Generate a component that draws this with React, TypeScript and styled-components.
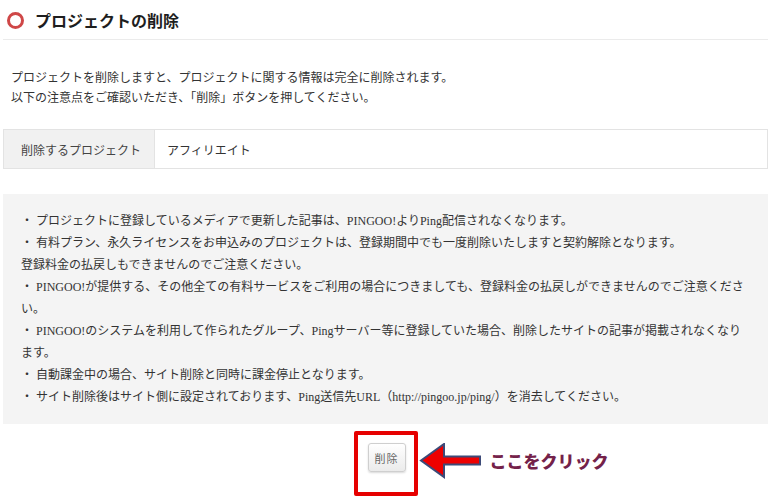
import styled, { createGlobalStyle } from 'styled-components';

const GlobalStyle = createGlobalStyle`
  html, body {
    margin: 0;
    padding: 0;
    background: #ffffff;
  }
  body {
    font-family: "Liberation Serif", "Noto Sans CJK JP", serif;
    color: #333333;
  }
`;

const notes: { text: string; extra?: string }[] = [
  { text: 'プロジェクトに登録しているメディアで更新した記事は、PINGOO!よりPing配信されなくなります。' },
  {
    text: '有料プラン、永久ライセンスをお申込みのプロジェクトは、登録期間中でも一度削除いたしますと契約解除となります。',
    extra: '登録料金の払戻しもできませんのでご注意ください。',
  },
  { text: 'PINGOO!が提供する、その他全ての有料サービスをご利用の場合につきましても、登録料金の払戻しができませんのでご注意ください。' },
  { text: 'PINGOO!のシステムを利用して作られたグループ、Pingサーバー等に登録していた場合、削除したサイトの記事が掲載されなくなります。' },
  { text: '自動課金中の場合、サイト削除と同時に課金停止となります。' },
  { text: 'サイト削除後はサイト側に設定されております、Ping送信先URL（http://pingoo.jp/ping/）を消去してください。' },
];

const App = () => {
  return (
    <>
      <GlobalStyle />
      <Page>
        <Header>
          <RingMark />
          <Title>プロジェクトの削除</Title>
        </Header>

        <Lead>
          プロジェクトを削除しますと、プロジェクトに関する情報は完全に削除されます。
          <br />
          以下の注意点をご確認いただき、「削除」ボタンを押してください。
        </Lead>

        <InfoTable>
          <LabelCell>削除するプロジェクト</LabelCell>
          <ValueCell>アフィリエイト</ValueCell>
        </InfoTable>

        <NoteBox>
          {notes.map((note, idx) => (
            <NoteLine key={idx}>
              {`・ ${note.text}`}
              {note.extra && (
                <>
                  <br />
                  {note.extra}
                </>
              )}
            </NoteLine>
          ))}
        </NoteBox>

        <ActionRow>
          <HighlightFrame>
            <DeleteButton type="button">削除</DeleteButton>
          </HighlightFrame>
          <Annotation>
            <svg width="64" height="36" viewBox="0 0 64 36">
              <path
                d="M2 17.5 L25 1 L25 13.5 L61 13.5 L61 21.5 L25 21.5 L25 34 Z"
                fill="#ee0000"
                stroke="#3d4a78"
                strokeWidth="2"
                strokeLinejoin="miter"
              />
            </svg>
            <ClickLabel>ここをクリック</ClickLabel>
          </Annotation>
        </ActionRow>
      </Page>
    </>
  );
};

const Page = styled.div`
  width: 765px;
  margin-left: 3px;
  display: flex;
  flex-direction: column;
`;

const Header = styled.div`
  height: 40px;
  display: flex;
  align-items: center;
  gap: 11px;
  padding-left: 4px;
  border-bottom: 1px solid #ebebeb;
  box-sizing: border-box;
  padding-top: 1px;
`;

const RingMark = styled.span`
  width: 17px;
  height: 17px;
  border: 3.5px solid #cf4747;
  border-radius: 50%;
  box-sizing: border-box;
`;

const Title = styled.h1`
  margin: 0;
  font-family: "Noto Sans CJK JP", sans-serif;
  font-size: 16px;
  font-weight: 700;
  color: #1e1e1e;
  line-height: 20px;
`;

const Lead = styled.p`
  margin: 27px 0 0;
  padding-left: 8px;
  font-family: "Noto Sans CJK JP", sans-serif;
  font-size: 12px;
  line-height: 20px;
  color: #333333;
`;

const InfoTable = styled.div`
  margin-top: 22px;
  display: flex;
  height: 40px;
  border: 1px solid #e3e3e3;
  box-sizing: border-box;
  font-family: "Noto Sans CJK JP", sans-serif;
  font-size: 12px;
`;

const LabelCell = styled.div`
  width: 151px;
  padding-left: 17px;
  box-sizing: border-box;
  display: flex;
  align-items: center;
  background: #f1f1f1;
  border-right: 1px solid #e3e3e3;
  color: #444444;
`;

const ValueCell = styled.div`
  flex: 1;
  padding-left: 12px;
  display: flex;
  align-items: center;
  color: #333333;
`;

const NoteBox = styled.div`
  margin-top: 25px;
  padding: 16px 18px;
  background: #f4f4f4;
  display: flex;
  flex-direction: column;
`;

const NoteLine = styled.p`
  margin: 0;
  font-size: 12px;
  line-height: 22px;
  color: #333333;
`;

const ActionRow = styled.div`
  margin-top: 7px;
  display: grid;
  grid-template-columns: 1fr auto 1fr;
  align-items: center;
`;

const HighlightFrame = styled.div`
  grid-column: 2;
  width: 64px;
  height: 65px;
  box-sizing: border-box;
  border: 4px solid #e60000;
  border-radius: 2px;
  padding: 8px 8px 20px 10px;
  display: flex;
  align-items: flex-start;
`;

const DeleteButton = styled.button`
  width: 38px;
  height: 29px;
  padding: 0;
  border: 1px solid #cfcfcf;
  border-radius: 3px;
  background: linear-gradient(#ffffff, #ebebeb);
  box-shadow: 0 1px 2px rgba(0, 0, 0, 0.15);
  font-family: "Noto Sans CJK JP", sans-serif;
  font-size: 11px;
  letter-spacing: 1px;
  color: #666666;
  cursor: pointer;
`;

const Annotation = styled.div`
  grid-column: 3;
  justify-self: start;
  display: flex;
  align-items: center;
  padding-left: 1px;
  margin-bottom: 6px;
`;

const ClickLabel = styled.span`
  margin-left: 7px;
  font-family: "Noto Sans CJK JP", sans-serif;
  font-size: 17px;
  font-weight: 900;
  color: #74224a;
  line-height: 24px;
`;

export default App;
